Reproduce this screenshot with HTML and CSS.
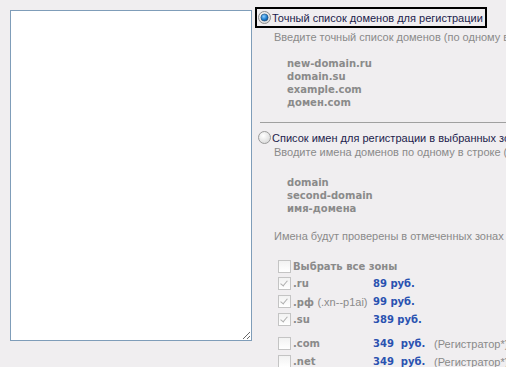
FILE: index.html
```html
<!DOCTYPE html>
<html lang="ru">
<head>
<meta charset="utf-8">
<link rel="stylesheet" href="styles.css">
</head>
<body>
<div class="page">
  <textarea class="domains"></textarea>
  <div class="options">
    <label class="opt opt-active">
      <svg class="radio" width="13" height="13" viewBox="0 0 13 13"><defs><radialGradient id="rg1" cx="0.4" cy="0.35" r="0.7"><stop offset="0" stop-color="#ffffff"/><stop offset="1" stop-color="#d6d6d6"/></radialGradient><radialGradient id="dot" cx="0.4" cy="0.35" r="0.7"><stop offset="0" stop-color="#8fd0ff"/><stop offset="0.6" stop-color="#1f7fd0"/><stop offset="1" stop-color="#0b4f96"/></radialGradient></defs><circle cx="6.5" cy="6.5" r="6" fill="url(#rg1)" stroke="#8c8c8c"/><circle cx="6.5" cy="6.5" r="3.6" fill="url(#dot)" stroke="#204a70" stroke-width="0.6"/></svg>
      <span>Точный список доменов для регистрации</span>
    </label>
    <p class="hint hint-first">Введите точный список доменов (по одному в строке)</p>
    <div class="examples">new-domain.ru<br>domain.su<br>example.com<br>домен.com</div>
    <hr class="sep">
    <label class="opt opt-second">
      <svg class="radio" width="13" height="13" viewBox="0 0 13 13"><defs><radialGradient id="rg2" cx="0.4" cy="0.35" r="0.7"><stop offset="0" stop-color="#ffffff"/><stop offset="1" stop-color="#d8d8d8"/></radialGradient></defs><circle cx="6.5" cy="6.5" r="6" fill="url(#rg2)" stroke="#9a9a9a"/></svg>
      <span>Список имен для регистрации в выбранных зонах</span>
    </label>
    <p class="hint hint-second">Вводите имена доменов по одному в строке (без зоны)</p>
    <div class="examples examples-second">domain<br>second-domain<br>имя-домена</div>
    <p class="hint hint-third">Имена будут проверены в отмеченных зонах</p>
    <div class="zones">
      <div class="zone zone-all"><span class="cb"></span><span class="zname">Выбрать все зоны</span></div>
      <div class="zone"><span class="cb cb-on"></span><span class="zname">.ru</span><span class="price">89 руб.</span></div>
      <div class="zone"><span class="cb cb-on"></span><span class="zname">.рф <span class="puny">(.xn--p1ai)</span></span><span class="price">99 руб.</span></div>
      <div class="zone"><span class="cb cb-on"></span><span class="zname">.su</span><span class="price">389 руб.</span></div>
      <div class="zone zone-gap"><span class="cb"></span><span class="zname">.com</span><span class="price">349&nbsp; руб.</span><span class="note">(Регистратор*)</span></div>
      <div class="zone"><span class="cb"></span><span class="zname">.net</span><span class="price">349&nbsp; руб.</span><span class="note">(Регистратор*)</span></div>
    </div>
  </div>
</div>
</body>
</html>
```

FILE: styles.css
```css
html, body {
  margin: 0;
  padding: 0;
  background: #f0eef0;
  overflow: hidden;
}
body {
  font-family: Tahoma, "Liberation Sans", Arial, sans-serif;
  font-size: 11px;
  color: #8a8a8a;
}
.page {
  display: flex;
  align-items: flex-start;
  padding: 10px 0 0 10px;
  height: 357px;
}
.domains {
  box-sizing: border-box;
  width: 242px;
  height: 331px;
  margin: 0;
  border: 1px solid #7f9db9;
  background: #fff;
  resize: both;
  flex: none;
}
.options {
  flex: 1;
  min-width: 0;
  margin-left: 3px;
  margin-top: -3px;
  white-space: nowrap;
  overflow: hidden;
}
.opt {
  display: flex;
  align-items: center;
  gap: 1px;
  height: 17px;
  color: #1c1c4c;
  border: 2px solid transparent;
  width: max-content;
  padding-right: 2px;
}
.opt-active {
  border-color: #000;
}
.opt-second {
  margin-top: 4px;
}
.radio {
  margin-left: 1px;
  flex: none;
}
.hint {
  margin: 0;
  padding-left: 19px;
  line-height: 13px;
}
.hint-first { margin-top: 3px; }
.examples {
  font-family: "DejaVu Sans", Verdana, sans-serif;
  font-size: 10px;
  font-weight: bold;
  padding-left: 32px;
  line-height: 13px;
  margin-top: 13px;
}
.sep {
  margin: 13px 0 0 5px;
  border: 0;
  border-top: 1px solid #a0a0a0;
  height: 0;
}
.hint-second { margin-top: -2px; }
.examples-second { margin-top: 17px; }
.hint-third { margin-top: 15px; }
.zones {
  padding-left: 23px;
  margin-top: 17px;
}
.zone {
  display: flex;
  align-items: center;
  height: 13px;
  margin-bottom: 5px;
}
.zone-all { margin-bottom: 4px; }
.zone-gap { margin-top: 11px; }
.cb {
  box-sizing: border-box;
  width: 13px;
  height: 13px;
  border: 1px solid #c4c4c4;
  background: linear-gradient(#f2f2f2, #ffffff);
  flex: none;
  margin-right: 2px;
  position: relative;
}
.cb-on::after {
  content: "";
  position: absolute;
  left: 3px;
  top: 1px;
  width: 3px;
  height: 6px;
  border-right: 1px solid #b0b0b0;
  border-bottom: 1px solid #b0b0b0;
  transform: rotate(40deg);
}
.zname {
  font-family: "DejaVu Sans", Verdana, sans-serif;
  font-size: 10px;
  font-weight: bold;
  width: 80px;
  flex: none;
}
.zone-all .zname { width: auto; }
.puny {
  font-family: Tahoma, "Liberation Sans", Arial, sans-serif;
  font-size: 11px;
  font-weight: normal;
}
.price {
  font-family: "DejaVu Sans", Verdana, sans-serif;
  font-size: 10px;
  font-weight: bold;
  color: #2a52b0;
  width: 61px;
  flex: none;
}
.note { flex: none; }
```
